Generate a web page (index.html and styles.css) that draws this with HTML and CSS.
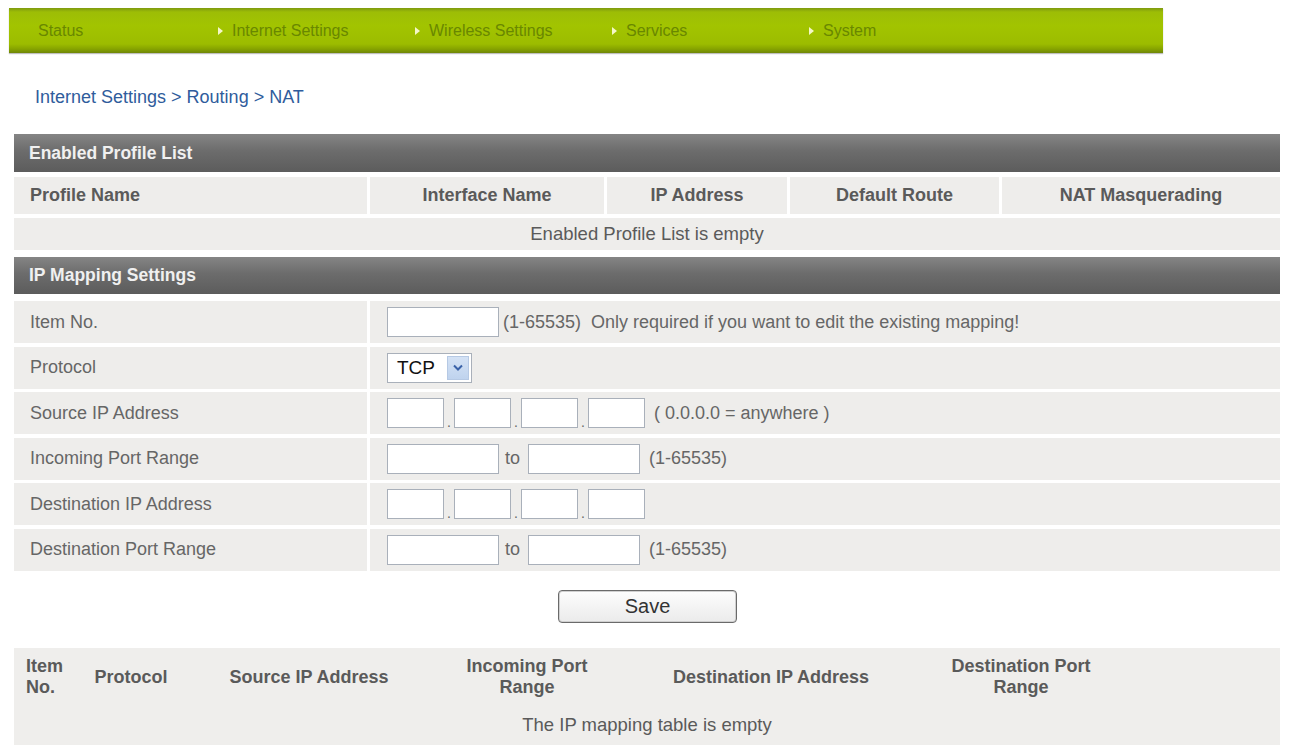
FILE: index.html
```html
<!DOCTYPE html>
<html>
<head>
<meta charset="utf-8">
<title>NAT</title>
<link rel="stylesheet" href="styles.css">
</head>
<body>
<nav class="nav">
  <div class="nav-item first">Status</div>
  <div class="nav-item"><span class="arr"></span>Internet Settings</div>
  <div class="nav-item"><span class="arr"></span>Wireless Settings</div>
  <div class="nav-item"><span class="arr"></span>Services</div>
  <div class="nav-item"><span class="arr"></span>System</div>
</nav>

<div class="crumb">Internet Settings &gt; Routing &gt; NAT</div>

<section class="panel">
  <div class="panel-head">Enabled Profile List</div>
  <div class="profile-grid">
    <div class="ph left">Profile Name</div>
    <div class="ph">Interface Name</div>
    <div class="ph">IP Address</div>
    <div class="ph">Default Route</div>
    <div class="ph">NAT Masquerading</div>
    <div class="empty">Enabled Profile List is empty</div>
  </div>

  <div class="panel-head second">IP Mapping Settings</div>
  <div class="form-grid">
    <div class="lbl">Item No.</div>
    <div class="val"><input class="in-wide" type="text"><span class="hint">(1-65535)&nbsp; Only required if you want to edit the existing mapping!</span></div>

    <div class="lbl">Protocol</div>
    <div class="val"><div class="select"><span class="sel-text">TCP</span><span class="sel-btn"><svg width="10" height="7" viewBox="0 0 10 7"><path d="M1 1.5 L5 5.5 L9 1.5" fill="none" stroke="#3a62a8" stroke-width="2"/></svg></span></div></div>

    <div class="lbl">Source IP Address</div>
    <div class="val"><input class="in-ip" type="text"><span class="dot">.</span><input class="in-ip" type="text"><span class="dot">.</span><input class="in-ip" type="text"><span class="dot">.</span><input class="in-ip" type="text"><span class="hint hint-ip">( 0.0.0.0 = anywhere )</span></div>

    <div class="lbl">Incoming Port Range</div>
    <div class="val"><input class="in-wide" type="text"><span class="to">to</span><input class="in-wide" type="text"><span class="hint hint-port">(1-65535)</span></div>

    <div class="lbl">Destination IP Address</div>
    <div class="val"><input class="in-ip" type="text"><span class="dot">.</span><input class="in-ip" type="text"><span class="dot">.</span><input class="in-ip" type="text"><span class="dot">.</span><input class="in-ip" type="text"></div>

    <div class="lbl">Destination Port Range</div>
    <div class="val"><input class="in-wide" type="text"><span class="to">to</span><input class="in-wide" type="text"><span class="hint hint-port">(1-65535)</span></div>
  </div>
</section>

<div class="actions"><button class="save" type="button">Save</button></div>

<section class="map-table">
  <div class="mh left">Item<br>No.</div>
  <div class="mh">Protocol</div>
  <div class="mh">Source IP Address</div>
  <div class="mh">Incoming Port<br>Range</div>
  <div class="mh">Destination IP Address</div>
  <div class="mh">Destination Port<br>Range</div>
  <div class="mh"></div>
  <div class="map-empty">The IP mapping table is empty</div>
</section>
</body>
</html>
```

FILE: styles.css
```css
* { box-sizing: border-box; }

html, body {
  margin: 0;
  padding: 0;
  background: #ffffff;
  font-family: "Liberation Sans", Arial, sans-serif;
  color: #555555;
}

body {
  width: 1290px;
  height: 745px;
  overflow: hidden;
}

/* top navigation bar */
.nav {
  margin: 8px 0 0 9px;
  width: 1154px;
  height: 45px;
  display: flex;
  align-items: center;
  background: linear-gradient(to bottom, #7f9a10 0px, #9dbd06 4px, #a2c400 18px, #9cbc00 36px, #86a300 41px, #6f8608 45px);
  box-shadow: 0 1px 1px rgba(0,0,0,0.25);
}

.nav-item {
  width: 197px;
  display: flex;
  align-items: center;
  font-size: 16px;
  color: #698700;
  white-space: nowrap;
}

.nav-item.first {
  width: 209px;
  padding-left: 29px;
}

.arr {
  width: 0;
  height: 0;
  border-left: 5px solid #f4f7c8;
  border-top: 4.5px solid transparent;
  border-bottom: 4.5px solid transparent;
  margin-right: 9px;
}

/* breadcrumb */
.crumb {
  margin: 33px 0 0 35px;
  height: 22px;
  line-height: 22px;
  font-size: 18px;
  color: #2f5c9c;
}

/* panels */
.panel {
  margin: 26px 0 0 14px;
  width: 1266px;
}

.panel-head {
  height: 38px;
  line-height: 38px;
  padding-left: 15px;
  font-size: 17.5px;
  font-weight: bold;
  color: #f0f0f0;
  background: linear-gradient(to bottom, #858585 0%, #6c6c6c 45%, #5c5c5c 100%);
}

.panel-head.second {
  margin-top: 7px;
  height: 37px;
  line-height: 37px;
}

.profile-grid {
  margin-top: 5px;
  display: grid;
  grid-template-columns: 353px 234px 180px 209px 278px;
  grid-template-rows: 37px 32px;
  column-gap: 3px;
  row-gap: 4px;
}

.ph {
  line-height: 37px;
  background: #eeedeb;
  text-align: center;
  font-weight: bold;
  font-size: 18px;
  color: #5a5a5a;
}

.ph.left {
  text-align: left;
  padding-left: 16px;
}

.empty {
  grid-column: 1 / -1;
  line-height: 32px;
  background: #eeedeb;
  text-align: center;
  font-size: 18.5px;
  color: #5a5a5a;
}

/* mapping form */
.form-grid {
  margin-top: 7px;
  display: grid;
  grid-template-columns: 353px 910px;
  grid-auto-rows: 42px;
  column-gap: 3px;
  row-gap: 3.5px;
}

.lbl {
  background: #eeedeb;
  display: flex;
  align-items: center;
  padding-left: 16px;
  font-size: 18px;
  color: #666;
}

.val {
  background: #eeedeb;
  display: flex;
  align-items: center;
  padding-left: 17px;
}

input {
  margin: 0;
  height: 30px;
  border: 1px solid #a9b0ba;
  background: #ffffff;
  font-family: inherit;
  font-size: 14px;
  padding: 0 3px;
}

.in-wide { width: 112px; }
.in-ip { width: 57px; }

.dot {
  width: 10px;
  align-self: flex-end;
  margin-bottom: 6px;
  text-align: center;
  font-size: 14px;
  line-height: 12px;
  color: #666;
}

.to {
  width: 29px;
  padding-left: 6px;
  font-size: 18px;
  color: #666;
}

.hint {
  margin-left: 4px;
  font-size: 18px;
  color: #666;
  white-space: nowrap;
}

.hint-ip { margin-left: 9px; }
.hint-port { margin-left: 9px; }

.select {
  width: 85px;
  height: 30px;
  border: 1px solid #a9b0ba;
  background: #fff;
  display: flex;
  align-items: center;
  padding: 2px;
}

.sel-text {
  flex: 1;
  padding-left: 7px;
  font-size: 19px;
  color: #111;
}

.sel-btn {
  width: 22px;
  height: 24px;
  background: linear-gradient(to bottom, #d4e2f5, #bfd3ee);
  border: 1px solid #b6c9e4;
  display: flex;
  align-items: center;
  justify-content: center;
}

/* save */
.actions {
  margin-top: 19px;
  display: flex;
  padding-left: 558px;
}

.save {
  width: 179px;
  height: 33px;
  border: 1px solid #6a6a6a;
  border-radius: 4px;
  background: linear-gradient(to bottom, #fdfdfd, #ebebeb);
  font-family: inherit;
  font-size: 20px;
  color: #333;
  box-shadow: inset 0 0 0 1px #d0d0d0;
}

/* bottom mapping table */
.map-table {
  margin: 25px 0 0 14px;
  width: 1266px;
  background: #efeeec;
  display: grid;
  grid-template-columns: 68px 98px 258px 178px 310px 190px 164px;
  grid-template-rows: 57px 40px;
}

.mh {
  display: flex;
  align-items: center;
  justify-content: center;
  text-align: center;
  font-size: 18px;
  font-weight: bold;
  line-height: 21px;
  color: #5a5a5a;
  padding-top: 2px;
}

.mh.left {
  justify-content: flex-start;
  text-align: left;
  padding-left: 12px;
}

.map-empty {
  grid-column: 1 / -1;
  text-align: center;
  font-size: 18.5px;
  line-height: 26px;
  padding-top: 7px;
  color: #5a5a5a;
}
```
